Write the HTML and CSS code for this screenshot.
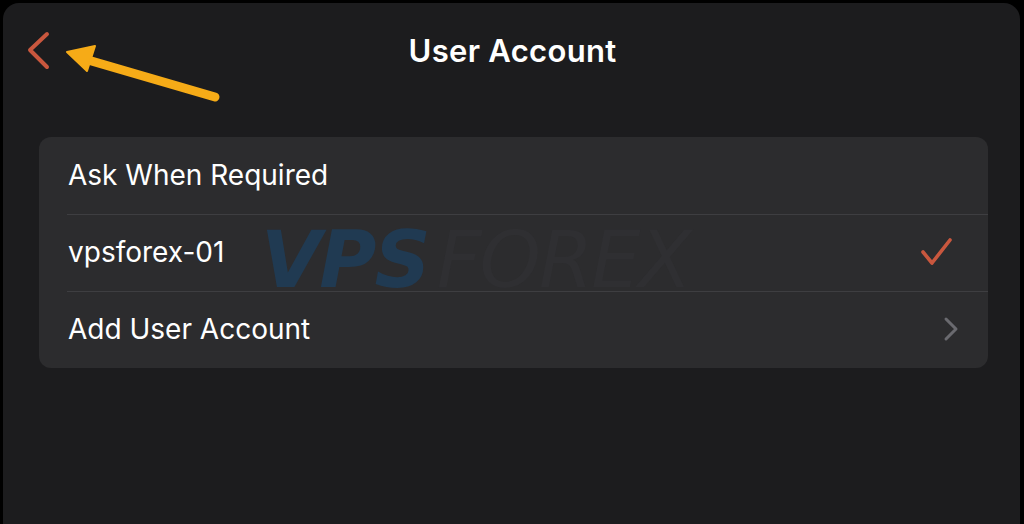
FILE: index.html
```html
<!DOCTYPE html>
<html>
<head>
<meta charset="utf-8">
<link rel="stylesheet" href="styles.css">
</head>
<body>
<div class="panel">
  <header class="nav">
    <div class="nav-left">
      <svg class="back" width="30" height="40" viewBox="0 0 30 40">
        <polyline points="20,4 3,20 20,37" fill="none" stroke="#c9573e" stroke-width="4" stroke-linecap="round" stroke-linejoin="round"/>
      </svg>
    </div>
    <h1 class="title">User Account</h1>
    <div class="nav-right"></div>
  </header>
  <section class="card">
    <div class="watermark"><span class="wm-vps">VPS</span><span class="wm-forex">FOREX</span></div>
    <div class="row"><span class="label">Ask When Required</span></div>
    <div class="row"><span class="label">vpsforex-01</span>
      <svg class="check" width="34" height="32" viewBox="0 0 34 32">
        <polyline points="3,16 12,27 30,4" fill="none" stroke="#c9573e" stroke-width="3.6" stroke-linecap="round" stroke-linejoin="round"/>
      </svg>
    </div>
    <div class="row"><span class="label">Add User Account</span>
      <svg class="chev" width="20" height="26" viewBox="0 0 20 26">
        <polyline points="6,3 16,13 6,23" fill="none" stroke="#6a6a6f" stroke-width="3" stroke-linecap="round" stroke-linejoin="round"/>
      </svg>
    </div>
  </section>
</div>
<svg class="annot" width="240" height="120" viewBox="0 0 240 120">
  <line x1="88" y1="60" x2="215" y2="97" stroke="#f6ab17" stroke-width="9" stroke-linecap="round"/>
  <polygon points="67,52 95,46 87,71" fill="#f6ab17" stroke="#f6ab17" stroke-width="2" stroke-linejoin="round"/>
</svg>
</body>
</html>
```

FILE: styles.css
```css
html, body {
  margin: 0;
  padding: 0;
  background: #000;
  width: 1024px;
  height: 524px;
  overflow: hidden;
  font-family: Inter, "Noto Sans", "Liberation Sans", sans-serif;
}
.panel {
  margin: 3px 4px 0 3px;
  height: 521px;
  background: #1c1c1e;
  border-radius: 16px 16px 0 0;
  position: relative;
}
.nav {
  display: grid;
  grid-template-columns: 1fr auto 1fr;
  align-items: center;
  height: 96px;
}
.nav-left {
  padding-left: 24px;
  display: flex;
  align-items: center;
}
.back { display: block; margin-top: -3px; }
.title {
  margin: 0;
  color: #fff;
  font-size: 31px;
  font-weight: 600;
  letter-spacing: 0.3px;
  margin-top: -2px;
  transform: translateX(1px);
}
.card {
  position: relative;
  margin: 38px 32px 0 36px;
  background: #2c2c2e;
  border-radius: 12px;
  overflow: hidden;
}
.row {
  position: relative;
  height: 77px;
  display: flex;
  align-items: center;
  justify-content: space-between;
  padding: 0 28px 0 29px;
  z-index: 1;
}
.row + .row::before {
  content: "";
  position: absolute;
  top: 0;
  left: 28px;
  right: 0;
  height: 1px;
  background: #3e3e41;
}
.label {
  color: #fff;
  font-size: 28px;
  font-weight: 400;
  letter-spacing: 0;
  margin-top: -2px;
}
.check { display: block; margin-right: 6px; margin-top: -2px; }
.chev { display: block; margin-top: -1px; }
.watermark {
  position: absolute;
  left: 222px;
  top: 84px;
  font-family: "DejaVu Sans", sans-serif;
  font-weight: 700;
  font-style: italic;
  font-size: 78px;
  line-height: 1;
  letter-spacing: -2px;
  white-space: nowrap;
  z-index: 0;
}
.wm-vps {
  color: #203a52;
}
.wm-forex {
  color: #2f2f32;
  font-weight: 400;
  margin-left: 8px;
}
.annot {
  position: absolute;
  left: 0;
  top: 0;
}
```
